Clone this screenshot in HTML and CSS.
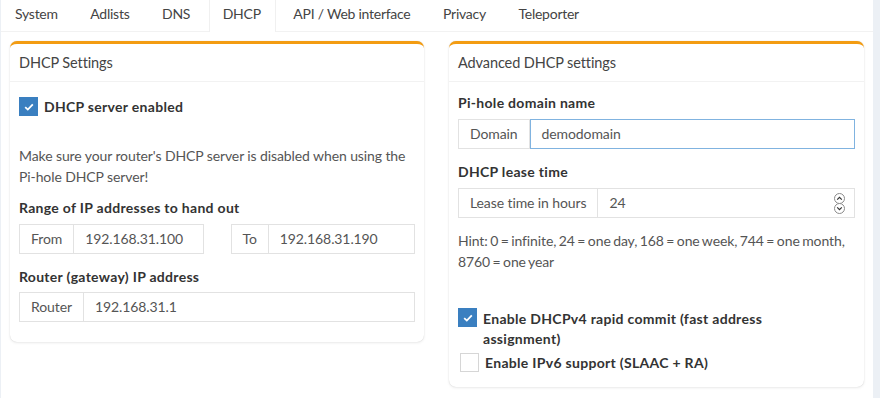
FILE: index.html
```html
<!DOCTYPE html>
<html lang="en">
<head>
    <meta charset="UTF-8">
    <title>Pi-hole - DHCP settings</title>
    <link rel="stylesheet" href="styles.css">
</head>
<body>
    <div class="tabs-wrap">
        <ul class="nav-tabs">
            <li>System</li>
            <li>Adlists</li>
            <li>DNS</li>
            <li class="active">DHCP</li>
            <li>API / Web interface</li>
            <li>Privacy</li>
            <li>Teleporter</li>
        </ul>

        <div class="tab-content">
            <div class="box">
                <div class="box-header">DHCP Settings</div>
                <div class="box-body left-body">
                    <div class="check-row first-check">
                        <span class="checkbox checked"><svg width="10" height="8" viewBox="0 0 10 8"><path d="M1.2 4.2 L3.8 6.6 L8.8 1.4" fill="none" stroke="#fff" stroke-width="1.8"/></svg></span>
                        <span class="check-label">DHCP server enabled</span>
                    </div>
                    <p class="note">Make sure your router's DHCP server is disabled when using the Pi-hole DHCP server!</p>
                    <div class="label">Range of IP addresses to hand out</div>
                    <div class="range-row">
                        <div class="input-group">
                            <span class="addon">From</span>
                            <span class="field">192.168.31.100</span>
                        </div>
                        <div class="input-group">
                            <span class="addon">To</span>
                            <span class="field">192.168.31.190</span>
                        </div>
                    </div>
                    <div class="label label-gap">Router (gateway) IP address</div>
                    <div class="input-group router">
                        <span class="addon">Router</span>
                        <span class="field">192.168.31.1</span>
                    </div>
                </div>
            </div>

            <div class="box">
                <div class="box-header">Advanced DHCP settings</div>
                <div class="box-body right-body">
                    <div class="label">Pi-hole domain name</div>
                    <div class="input-group">
                        <span class="addon">Domain</span>
                        <span class="field focus">demodomain</span>
                    </div>
                    <div class="label label-gap">DHCP lease time</div>
                    <div class="input-group">
                        <span class="addon">Lease time in hours</span>
                        <span class="field">24
                            <svg class="spinner" width="11" height="21" viewBox="0 0 11 21">
                                <rect x="0.5" y="0.5" width="10" height="10" rx="5" fill="#fff" stroke="#8a8a8a"/>
                                <rect x="0.5" y="10.5" width="10" height="10" rx="5" fill="#fff" stroke="#8a8a8a"/>
                                <path d="M3.2 6.6 L5.5 4.3 L7.8 6.6" fill="none" stroke="#333" stroke-width="1.2"/>
                                <path d="M3.2 14.4 L5.5 16.7 L7.8 14.4" fill="none" stroke="#333" stroke-width="1.2"/>
                            </svg>
                        </span>
                    </div>
                    <p class="hint">Hint: 0 = infinite, 24 = one day, 168 = one week, 744 = one month, 8760 = one year</p>
                    <div class="check-row rapid">
                        <span class="checkbox checked"><svg width="10" height="8" viewBox="0 0 10 8"><path d="M1.2 4.2 L3.8 6.6 L8.8 1.4" fill="none" stroke="#fff" stroke-width="1.8"/></svg></span>
                        <span class="check-label">Enable DHCPv4 rapid commit (fast address assignment)</span>
                    </div>
                    <div class="check-row ipv6">
                        <span class="checkbox"></span>
                        <span class="check-label">Enable IPv6 support (SLAAC + RA)</span>
                    </div>
                </div>
            </div>
        </div>
    </div>
</body>
</html>
```

FILE: styles.css
```css
body {
    margin: 0;
    background-color: #ecf0f5;
    font-family: Lato, "Noto Sans", sans-serif;
    font-size: 14px;
    letter-spacing: -0.1px;
    color: #555;
    height: 398px;
    overflow: hidden;
}

.tabs-wrap {
    background-color: #fff;
    margin-left: 1px;
    width: 872px;
    height: 398px;
}

.nav-tabs {
    display: flex;
    list-style: none;
    margin: 0;
    padding: 0;
    height: 32px;
    border-bottom: 1px solid #f2f2f2;
    box-sizing: border-box;
}

.nav-tabs li {
    padding: 5px 14px 0 13px;
    margin-right: 3.5px;
    color: #444;
    font-size: 14px;
    line-height: 18px;
    letter-spacing: -0.25px;
    border-left: 1px solid transparent;
    border-right: 1px solid transparent;
}

.nav-tabs li.active {
    border-left-color: #f0f0f0;
    border-right-color: #f0f0f0;
    background-color: #fff;
    height: 27px;
}

.tab-content {
    display: grid;
    grid-template-columns: 414px 415px;
    column-gap: 25px;
    padding: 9px 0 0 9px;
    align-items: start;
}

.box {
    background-color: #fff;
    border-top: 3px solid #f39c12;
    border-radius: 7px;
    box-shadow: 0 0 1px rgba(0, 0, 0, 0.18), 0 1px 3px rgba(0, 0, 0, 0.08);
}

.box-header {
    height: 37px;
    line-height: 37px;
    padding: 0 9px;
    font-size: 14.5px;
    color: #444;
    border-bottom: 1px solid #f2f2f2;
}

.box-body {
    padding: 0 9px;
}

.left-body {
    padding-top: 15px;
    padding-bottom: 20px;
}

.right-body {
    padding-top: 11px;
    padding-bottom: 15px;
}

.check-row {
    display: flex;
    align-items: flex-start;
}

.checkbox {
    flex: none;
    width: 19px;
    height: 19px;
    box-sizing: border-box;
    border: 1px solid #d6d6d6;
    background-color: #fff;
    display: flex;
    align-items: center;
    justify-content: center;
}

.checkbox.checked {
    background-color: #3a7fc0;
    border-color: #3a7fc0;
}

.check-label {
    font-weight: bold;
    color: #333;
    margin-left: 6px;
    line-height: 19px;
    letter-spacing: 0.3px;
}

.note {
    margin: 29px 0 0;
    line-height: 21px;
}

.label {
    font-weight: bold;
    color: #333;
    line-height: 20px;
    margin-top: 11px;
    letter-spacing: 0.3px;
}

.right-body .label {
    margin-top: 0;
}

.right-body .label.label-gap,
.label.label-gap {
    margin-top: 13px;
}

.input-group {
    display: flex;
    height: 30px;
    margin-top: 6px;
    box-sizing: border-box;
}

.input-group.router {
    margin-top: 5px;
}

.range-row {
    display: flex;
    gap: 27px;
}

.range-row .input-group {
    flex: 1;
}

.addon {
    flex: none;
    padding: 0 11px;
    border: 1px solid #e2e2e2;
    color: #555;
    line-height: 28px;
}

.field {
    flex: 1;
    display: flex;
    align-items: center;
    justify-content: space-between;
    padding: 0 12px 0 11px;
    border: 1px solid #e2e2e2;
    border-left: none;
    color: #555;
    line-height: 28px;
}

.field.focus {
    border: 1px solid #80b3e0;
}

.spinner {
    margin-right: -3px;
}

.hint {
    margin: 12px 0 0;
    line-height: 21px;
    word-spacing: -1px;
}

.rapid {
    margin-top: 36px;
}

.rapid .check-label {
    line-height: 20px;
    padding-top: 1px;
    max-width: 300px;
}

.ipv6 {
    margin-top: 4px;
    padding-left: 2px;
}
```
